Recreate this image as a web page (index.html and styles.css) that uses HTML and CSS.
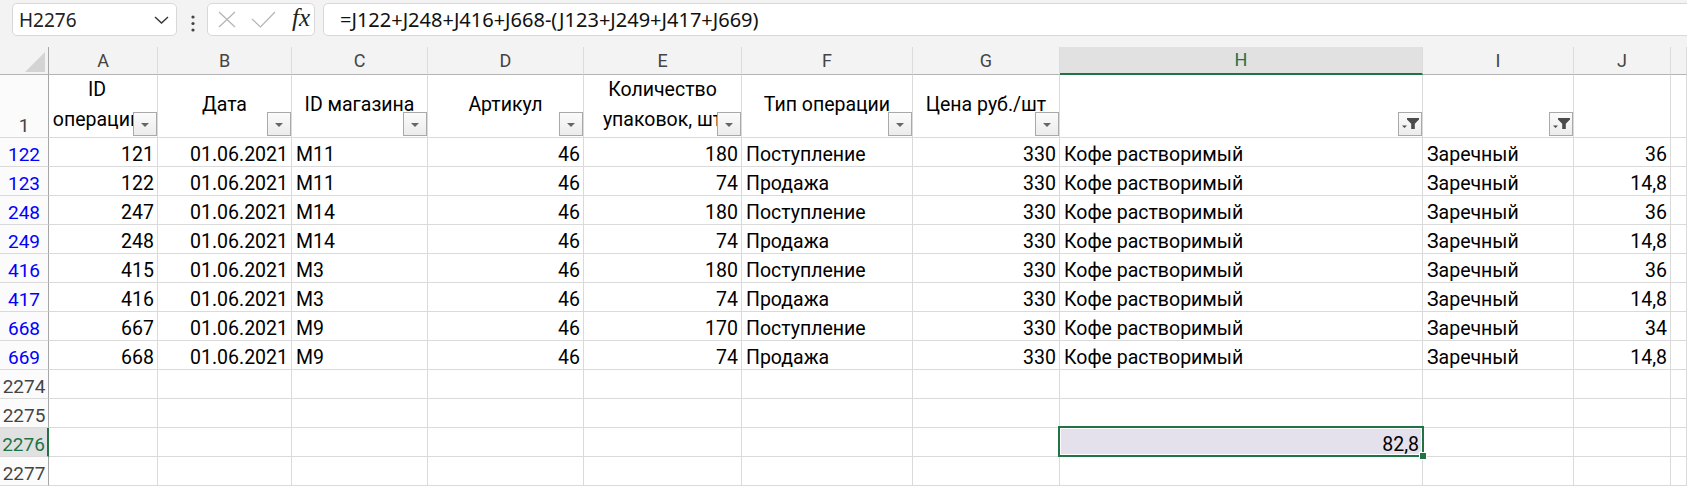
FILE: index.html
```html
<!DOCTYPE html>
<html lang="ru">
	<head>
		<meta charset="UTF-8" />
		<title>Книга1 - Excel</title>
		<link rel="stylesheet" href="styles.css">
	</head>
	<body>
		<div class="bar">
			<div class="namebox">
				<span>H2276</span>
				<svg class="chev" width="15" height="8" viewBox="0 0 15 8"><path d="M1 1l6.5 6 6.5-6" /></svg>
			</div>
			<svg class="more" width="4" height="17" viewBox="0 0 4 17"><circle cx="2" cy="2" r="1.6" /><circle cx="2" cy="8.5" r="1.6" /><circle cx="2" cy="15" r="1.6" /></svg>
			<div class="fxbox">
				<svg class="cancel" width="18" height="17" viewBox="0 0 18 17"><path d="M1 1l16 15M17 1L1 16" /></svg>
				<svg class="enter" width="25" height="17" viewBox="0 0 25 17"><path d="M1 8l8.5 8L24 1" /></svg>
				<span class="fx">fx</span>
			</div>
			<div class="formula">=J122+J248+J416+J668-(J123+J249+J417+J669)</div>
		</div>

		<div class="sheet">
			<div class="row head">
				<div class="corner"><span class="all"></span></div>
				<div>A</div><div>B</div><div>C</div><div>D</div><div>E</div>
				<div>F</div><div>G</div><div class="sel">H</div><div>I</div><div>J</div><div></div>
			</div>

			<div class="row title">
				<div class="rh">1</div>
				<div class="t narrow"><span>ID<br>операции</span><i class="fbtn"></i></div>
				<div class="t"><span>Дата</span><i class="fbtn"></i></div>
				<div class="t"><span>ID магазина</span><i class="fbtn"></i></div>
				<div class="t"><span>Артикул</span><i class="fbtn"></i></div>
				<div class="t"><span>Количество<br>упаковок, шт</span><i class="fbtn"></i></div>
				<div class="t"><span>Тип операции</span><i class="fbtn"></i></div>
				<div class="t"><span>Цена руб./шт</span><i class="fbtn"></i></div>
				<div class="t"><i class="fbtn on"><svg width="22" height="22" viewBox="0 0 22 22"><path d="M8 5h12v1.6l-4.2 4.2v5.2h-3.6v-5.2L8 6.6z" /><path d="M3 12.5h5l-2.5 2.5z" /></svg></i></div>
				<div class="t"><i class="fbtn on"><svg width="22" height="22" viewBox="0 0 22 22"><path d="M8 5h12v1.6l-4.2 4.2v5.2h-3.6v-5.2L8 6.6z" /><path d="M3 12.5h5l-2.5 2.5z" /></svg></i></div>
				<div class="t"></div>
				<div></div>
			</div>

			<div class="row">
				<div class="rh f">122</div>
				<div class="n">121</div><div class="n">01.06.2021</div><div>M11</div><div class="n">46</div>
				<div class="n">180</div><div>Поступление</div><div class="n">330</div><div>Кофе растворимый</div>
				<div>Заречный</div><div class="n">36</div><div></div>
			</div>
			<div class="row">
				<div class="rh f">123</div>
				<div class="n">122</div><div class="n">01.06.2021</div><div>M11</div><div class="n">46</div>
				<div class="n">74</div><div>Продажа</div><div class="n">330</div><div>Кофе растворимый</div>
				<div>Заречный</div><div class="n">14,8</div><div></div>
			</div>
			<div class="row">
				<div class="rh f">248</div>
				<div class="n">247</div><div class="n">01.06.2021</div><div>M14</div><div class="n">46</div>
				<div class="n">180</div><div>Поступление</div><div class="n">330</div><div>Кофе растворимый</div>
				<div>Заречный</div><div class="n">36</div><div></div>
			</div>
			<div class="row">
				<div class="rh f">249</div>
				<div class="n">248</div><div class="n">01.06.2021</div><div>M14</div><div class="n">46</div>
				<div class="n">74</div><div>Продажа</div><div class="n">330</div><div>Кофе растворимый</div>
				<div>Заречный</div><div class="n">14,8</div><div></div>
			</div>
			<div class="row">
				<div class="rh f">416</div>
				<div class="n">415</div><div class="n">01.06.2021</div><div>M3</div><div class="n">46</div>
				<div class="n">180</div><div>Поступление</div><div class="n">330</div><div>Кофе растворимый</div>
				<div>Заречный</div><div class="n">36</div><div></div>
			</div>
			<div class="row">
				<div class="rh f">417</div>
				<div class="n">416</div><div class="n">01.06.2021</div><div>M3</div><div class="n">46</div>
				<div class="n">74</div><div>Продажа</div><div class="n">330</div><div>Кофе растворимый</div>
				<div>Заречный</div><div class="n">14,8</div><div></div>
			</div>
			<div class="row">
				<div class="rh f">668</div>
				<div class="n">667</div><div class="n">01.06.2021</div><div>M9</div><div class="n">46</div>
				<div class="n">170</div><div>Поступление</div><div class="n">330</div><div>Кофе растворимый</div>
				<div>Заречный</div><div class="n">34</div><div></div>
			</div>
			<div class="row">
				<div class="rh f">669</div>
				<div class="n">668</div><div class="n">01.06.2021</div><div>M9</div><div class="n">46</div>
				<div class="n">74</div><div>Продажа</div><div class="n">330</div><div>Кофе растворимый</div>
				<div>Заречный</div><div class="n">14,8</div><div></div>
			</div>

			<div class="row">
				<div class="rh">2274</div>
				<div></div><div></div><div></div><div></div><div></div><div></div><div></div><div></div><div></div><div></div><div></div>
			</div>
			<div class="row">
				<div class="rh">2275</div>
				<div></div><div></div><div></div><div></div><div></div><div></div><div></div><div></div><div></div><div></div><div></div>
			</div>
			<div class="row">
				<div class="rh sel">2276</div>
				<div></div><div></div><div></div><div></div><div></div><div></div><div></div>
				<div class="n active">82,8</div>
				<div></div><div></div><div></div>
			</div>
			<div class="row">
				<div class="rh">2277</div>
				<div></div><div></div><div></div><div></div><div></div><div></div><div></div><div></div><div></div><div></div><div></div>
			</div>
		</div>
	</body>
</html>
```

FILE: styles.css
```css
body {
	margin: 0;
	background: #fff;
	color: #000;
	font-family: Roboto, "Noto Sans", sans-serif;
	overflow: hidden;
}

/* formula bar */
.bar {
	display: flex;
	align-items: flex-start;
	height: 47px;
	padding: 3px 0 0 12px;
	box-sizing: border-box;
	background: #f3f3f3;
}
.namebox,
.fxbox,
.formula {
	height: 33px;
	box-sizing: border-box;
	border: 1px solid #d8d8d8;
	border-radius: 5px;
	background: #fff;
	display: flex;
	align-items: center;
}
.namebox {
	width: 165px;
	justify-content: space-between;
	padding: 0 7px 0 6px;
	font: 19px "Noto Sans", sans-serif;
	color: #222;
}
.chev path {
	fill: none;
	stroke: #333;
	stroke-width: 1.4;
}
.more {
	margin: 0 0 0 14px;
	align-self: center;
	margin-top: -3px;
}
.more circle {
	fill: #444;
}
.fxbox {
	width: 108px;
	margin-left: 12px;
	padding-left: 10px;
}
.fxbox path {
	fill: none;
	stroke: #b4b4b4;
	stroke-width: 1.2;
}
.fxbox .enter {
	margin-left: 15px;
}
.fx {
	margin-left: 16px;
	font: italic 25px "Liberation Serif", serif;
	color: #222;
	margin-top: -3px;
}
.formula {
	flex: 1;
	margin: 0 -10px 0 8px;
	padding-left: 16px;
	font: 20px "Noto Sans", sans-serif;
	color: #111;
}

/* grid */
.row {
	display: grid;
	grid-template-columns: 49px 109px 134px 136px 156px 158px 171px 147px 363px 151px 97px 1fr;
	height: 29px;
	font-size: 19.5px;
}
.row > div {
	box-sizing: border-box;
	border-right: 1px solid #dadada;
	border-bottom: 1px solid #dadada;
	display: flex;
	align-items: flex-end;
	padding: 0 3px 0 4px;
	line-height: 22px;
	white-space: nowrap;
	overflow: hidden;
}
.row > .n {
	justify-content: flex-end;
	padding-right: 3px;
}

.head {
	height: 28px;
	background: #f3f3f3;
}
.head > div {
	justify-content: center;
	align-items: center;
	padding: 0;
	border-right-color: #dcdcdc;
	border-bottom-color: #b4b4b4;
	color: #444;
	font-size: 18px;
}
.head > .corner {
	justify-content: flex-end;
	align-items: flex-end;
	padding: 0 3px 2px 0;
	border-right-color: #a6a6a6;
}
.all {
	width: 0;
	height: 0;
	border-style: solid;
	border-width: 0 0 20px 20px;
	border-color: transparent transparent #d4d4d4 transparent;
}
.head > .sel {
	background: #e1e1e1;
	color: #217346;
	border-bottom: 2px solid #217346;
}

.row > .rh {
	justify-content: center;
	padding: 0;
	background: #fbfbfb;
	color: #444;
	font-size: 19px;
	border-right-color: #a6a6a6;
}
.row > .rh.f {
	color: #0000ff;
}
.row > .rh.sel {
	background: #e1e1e1;
	color: #217346;
	border-right: 2px solid #217346;
}

.title {
	height: 63px;
}
.row > .t {
	position: relative;
	align-items: center;
	justify-content: center;
	text-align: center;
	white-space: normal;
	line-height: 30px;
	padding: 0 2px 2px;
}
.row > .t.narrow {
	padding-right: 14px;
}
.t span {
	white-space: nowrap;
}
.fbtn {
	position: absolute;
	right: 0;
	bottom: 1px;
	width: 24px;
	height: 24px;
	box-sizing: border-box;
	border: 1px solid #a9a9a9;
	background: linear-gradient(#fbfbfb, #ececec);
	display: flex;
	align-items: center;
	justify-content: center;
}
.fbtn::after {
	content: "";
	border-left: 4px solid transparent;
	border-right: 4px solid transparent;
	border-top: 4px solid #666;
	margin-top: 1px;
}
.fbtn.on::after {
	display: none;
}
.fbtn svg path {
	fill: #4a4a4a;
}

/* selected cell */
.row > .active {
	position: relative;
	overflow: visible;
	background: #e4e1ec;
}
.active::before {
	content: "";
	position: absolute;
	top: -2px;
	left: -2px;
	right: -2px;
	bottom: -1px;
	border: 2px solid #217346;
	box-shadow: inset 0 0 0 1px #fff;
}
.active::after {
	content: "";
	position: absolute;
	right: -5px;
	bottom: -4px;
	width: 6px;
	height: 6px;
	background: #217346;
	border: 1px solid #fff;
	z-index: 1;
}
```
